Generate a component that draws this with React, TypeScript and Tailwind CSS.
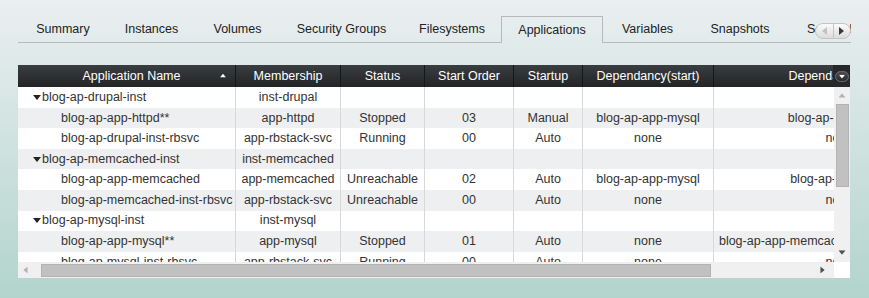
import React from "react";

interface AppRow {
  name: string;
  group?: boolean;
  membership: string;
  status?: string;
  order?: string;
  startup?: string;
  depStart?: string;
  depStop?: string;
}

const tabs = [
  { label: "Summary", w: "w-[90px]" },
  { label: "Instances", w: "w-[87px]" },
  { label: "Volumes", w: "w-[85px]" },
  { label: "Security Groups", w: "w-[123px]" },
  { label: "Filesystems", w: "w-[98px]" },
  { label: "Applications", w: "w-[102px]", active: true },
  { label: "Variables", w: "w-[89px]" },
  { label: "Snapshots", w: "w-[96px]" },
];

const rows: AppRow[] = [
  { name: "blog-ap-drupal-inst", group: true, membership: "inst-drupal" },
  { name: "blog-ap-app-httpd**", membership: "app-httpd", status: "Stopped", order: "03", startup: "Manual", depStart: "blog-ap-app-mysql", depStop: "blog-ap-app-mysql" },
  { name: "blog-ap-drupal-inst-rbsvc", membership: "app-rbstack-svc", status: "Running", order: "00", startup: "Auto", depStart: "none", depStop: "none" },
  { name: "blog-ap-memcached-inst", group: true, membership: "inst-memcached" },
  { name: "blog-ap-app-memcached", membership: "app-memcached", status: "Unreachable", order: "02", startup: "Auto", depStart: "blog-ap-app-mysql", depStop: "blog-ap-app-httpd" },
  { name: "blog-ap-memcached-inst-rbsvc", membership: "app-rbstack-svc", status: "Unreachable", order: "00", startup: "Auto", depStart: "none", depStop: "none" },
  { name: "blog-ap-mysql-inst", group: true, membership: "inst-mysql" },
  { name: "blog-ap-app-mysql**", membership: "app-mysql", status: "Stopped", order: "01", startup: "Auto", depStart: "none", depStop: "blog-ap-app-memcached,blog-ap-app-httpd" },
  { name: "blog-ap-mysql-inst-rbsvc", membership: "app-rbstack-svc", status: "Running", order: "00", startup: "Auto", depStart: "none", depStop: "none" },
];

const cell = "shrink-0 h-full flex items-center justify-center whitespace-nowrap overflow-hidden border-r border-[#d8d8d8]";
const head = "shrink-0 h-full flex items-center justify-center whitespace-nowrap overflow-hidden border-r border-[#151718]";

function Tri({ dir, color, className }: { dir: "up" | "down" | "left" | "right"; color: string; className?: string }) {
  const pts = {
    up: "0,5 4,0 8,5",
    down: "0,0 8,0 4,5",
    left: "5,0 5,8 0,4",
    right: "0,0 0,8 5,4",
  }[dir];
  const vertical = dir === "up" || dir === "down";
  return (
    <svg width={vertical ? 8 : 5} height={vertical ? 5 : 8} viewBox={vertical ? "0 0 8 5" : "0 0 5 8"} className={className}>
      <polygon points={pts} fill={color} />
    </svg>
  );
}

export default function App() {
  return (
    <div className="w-[869px] h-[298px] overflow-hidden bg-linear-to-b from-[#eaeff1] to-[#b2d4cc] text-[#333] text-[12.5px] font-['Liberation_Sans',Arial,sans-serif]">
      {/* Tabs */}
      <div className="relative ml-[18px] mt-[16px] w-[833px] h-[27px] flex overflow-hidden">
        {tabs.map((t) =>
          t.active ? (
            <div key={t.label} className={`${t.w} shrink-0 h-full flex items-center justify-center pt-[1px] border border-b-0 border-[#b9b9b9] text-[#222]`}>
              {t.label}
            </div>
          ) : (
            <div key={t.label} className={`${t.w} shrink-0 h-full flex items-center justify-center pt-[1px] border-b border-[#b9b9b9] text-[#222]`}>
              {t.label}
            </div>
          )
        )}
        <div className="flex-1 h-full flex items-center pl-[19px] pt-[1px] border-b border-[#b9b9b9] whitespace-nowrap text-[#222]">
          Schedules
        </div>
        <div className="absolute right-0 top-[7px] w-[36px] h-[16px] flex rounded-full border border-[#c4c4c4] bg-linear-to-b from-[#fbfbfb] to-[#dcdcdc] overflow-hidden">
          <div className="flex-1 flex items-center justify-center border-r border-[#c4c4c4]">
            <Tri dir="left" color="#c2c2c2" />
          </div>
          <div className="flex-1 flex items-center justify-center">
            <Tri dir="right" color="#3a3a3a" />
          </div>
        </div>
      </div>

      {/* Grid panel */}
      <div className="ml-[18px] mt-[22px] w-[832px] h-[213px] bg-white">
        {/* Header */}
        <div className="relative h-[22px] flex overflow-hidden bg-linear-to-b from-[#3b3e41] to-[#222426] text-white">
          <div className={`${head} w-[218px] pl-[10px] relative`}>
            Application Name
            <Tri dir="up" color="#ffffff" className="absolute right-[8px] top-[8px] scale-75" />
          </div>
          <div className={`${head} w-[105px]`}>Membership</div>
          <div className={`${head} w-[84px]`}>Status</div>
          <div className={`${head} w-[89px]`}>Start Order</div>
          <div className={`${head} w-[69px]`}>Startup</div>
          <div className={`${head} w-[131px]`}>Dependancy(start)</div>
          <div className={`${head} w-[252px]`}>Dependancy(stop)</div>
          <div className="absolute right-0 top-0 h-full w-[17px] flex items-center justify-center bg-[#26282a]">
            <div className="w-[14px] h-[11px] rounded-full border border-[#6a6d70] bg-linear-to-b from-[#4a4d50] to-[#2a2c2e] flex items-center justify-center">
              <Tri dir="down" color="#ffffff" className="scale-75" />
            </div>
          </div>
        </div>

        {/* Body */}
        <div className="flex h-[175px]">
          <div className="w-[816px] h-full overflow-hidden">
            {rows.map((r, i) => (
              <div key={r.name} className={`flex h-[20.6px] ${i % 2 ? "bg-[#eeeff0]" : "bg-white"}`}>
                {r.group ? (
                  <div className={`${cell} w-[218px] justify-start! pl-[15px] gap-[1px]`}>
                    <Tri dir="down" color="#222" />
                    {r.name}
                  </div>
                ) : (
                  <div className={`${cell} w-[218px] justify-start! pl-[43px]`}>{r.name}</div>
                )}
                <div className={`${cell} w-[105px]`}>{r.membership}</div>
                <div className={`${cell} w-[84px]`}>{r.status}</div>
                <div className={`${cell} w-[89px]`}>{r.order}</div>
                <div className={`${cell} w-[69px]`}>{r.startup}</div>
                <div className={`${cell} w-[131px]`}>{r.depStart}</div>
                <div className={`${cell} w-[252px]`}>{r.depStop}</div>
              </div>
            ))}
          </div>
          {/* vertical scrollbar */}
          <div className="w-[16px] h-full bg-[#f0f0f0] flex flex-col items-center">
            <Tri dir="up" color="#b4b4b4" className="mt-[6px] scale-90" />
            <div className="mt-[6px] w-[13px] h-[83px] bg-[#c1c1c1] border border-[#b3b3b3]" />
            <div className="flex-1" />
            <Tri dir="down" color="#505050" className="mb-[7px] scale-90" />
          </div>
        </div>

        {/* horizontal scrollbar */}
        <div className="flex h-[16px]">
          <div className="w-[816px] h-full bg-[#f0f0f0] flex items-center">
            <Tri dir="left" color="#b4b4b4" className="ml-[5px] scale-90" />
            <div className="ml-[13px] w-[670px] h-[13px] bg-[#c1c1c1] border border-[#b3b3b3]" />
            <div className="flex-1" />
            <Tri dir="right" color="#505050" className="mr-[9px] scale-90" />
          </div>
          <div className="w-[16px] h-full bg-white" />
        </div>
      </div>
    </div>
  );
}
